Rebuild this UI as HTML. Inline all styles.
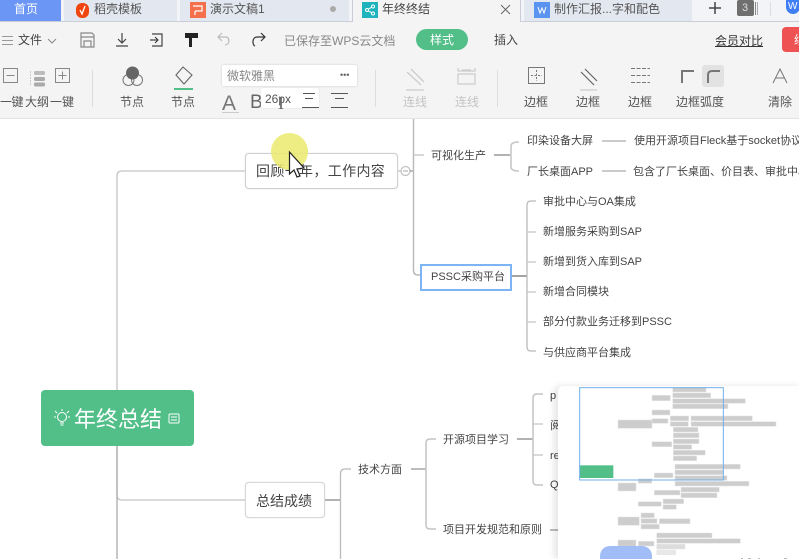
<!DOCTYPE html>
<html lang="zh"><head><meta charset="utf-8"><title>年终终结</title>
<style>
html,body{margin:0;padding:0;background:#fff}
#o{position:relative;width:803px;height:559px;overflow:hidden;background:#fff}
#p{position:absolute;left:0;top:0;width:799px;height:559px;overflow:hidden;background:#fff;font-family:"Liberation Sans","Noto Sans CJK SC",sans-serif;color:#444;filter:blur(.3px)}
#p div{position:absolute;white-space:nowrap}
.t{position:absolute;white-space:nowrap;line-height:16px}
.tb{font-size:12px;color:#555}
.m{font-size:11px;color:#444}
.g{color:#c4c4c4}
svg{position:absolute;overflow:visible}
</style></head><body><div id="o"><div id="p">
<!-- title bar -->
<div style="left:0;top:0;width:803px;height:21px;background:#f3f4f8"></div>
<div style="left:0;top:0;width:61px;height:21px;background:#6c96f5"></div>
<span class="t" style="left:14px;top:1px;font-size:12px;color:#fff">首页</span>
<div style="left:64px;top:0;width:113px;height:21px;background:#e3e7f0"></div>
<div style="left:180px;top:0;width:169px;height:21px;background:#e3e7f0"></div>
<div style="left:76px;top:3px;width:13px;height:15px;border-radius:6px;background:#f0450f"></div>
<svg style="left:76px;top:3px" width="13" height="15" fill="none" stroke="#fff" stroke-width="1.300"><path d="M4 7L6 11L9 3"/></svg>
<span class="t" style="left:94px;top:1px;font-size:12px;color:#555">稻壳模板</span>
<div style="left:190px;top:2px;width:16px;height:16px;background:#f5704a"></div>
<svg style="left:190px;top:2px" width="16" height="16" fill="none" stroke="#fff" stroke-width="1.200"><path d="M3 4H12V9H5M5 9V13"/></svg>
<span class="t" style="left:210px;top:1px;font-size:12px;color:#555">演示文稿1</span>
<div style="left:330px;top:6px;width:6px;height:6px;border-radius:3px;background:#aaa"></div>
<div style="left:352px;top:0;width:168px;height:22px;background:#f4f4f4"></div>
<div style="left:0;top:21px;width:352px;height:1px;background:#c9cdd8"></div>
<div style="left:352px;top:0;width:1px;height:22px;background:#c9cdd8"></div>
<div style="left:520px;top:0;width:1px;height:22px;background:#c9cdd8"></div>
<div style="left:520px;top:21px;width:283px;height:1px;background:#c9cdd8"></div>
<div style="left:362px;top:2px;width:16px;height:16px;background:#1eb3bd"></div>
<svg style="left:362px;top:2px" width="16" height="16" fill="none" stroke="#fff"><circle cx="5" cy="8" r="1.5"/><circle cx="11" cy="4.5" r="1.5"/><circle cx="11" cy="11.5" r="1.5"/><path d="M6.3 7.2L9.7 5.2M6.3 8.8L9.7 10.8"/></svg>
<span class="t" style="left:382px;top:1px;font-size:12px;color:#444">年终终结</span>
<svg style="left:500px;top:4px" width="12" height="12" stroke="#666" fill="none"><path d="M1 1L10 10M10 1L1 10"/></svg>
<div style="left:524px;top:0;width:168px;height:21px;background:#e3e7f0"></div>
<div style="left:534px;top:2px;width:16px;height:16px;background:#5a94f0"></div>
<svg style="left:534px;top:2px" width="16" height="16" fill="none" stroke="#fff"><path d="M4 5L6 11L8 6L10 11L12 5"/></svg>
<span class="t" style="left:554px;top:1px;font-size:12px;color:#555">制作汇报...字和配色</span>
<svg style="left:708px;top:1px" width="14" height="14" stroke="#444" stroke-width="1.5"><path d="M7 1V13M1 7H13"/></svg>
<div style="left:737px;top:0;width:17px;height:16px;background:#6f6f6f;border-radius:2px"></div>
<span class="t" style="left:742px;top:0;font-size:11px;color:#ddd">3</span>
<div style="left:755px;top:2px;width:1px;height:13px;background:#888"></div>
<div style="left:757px;top:2px;width:1px;height:13px;background:#aaa"></div>
<div style="left:770px;top:2px;width:1px;height:14px;background:#ddd"></div>
<div style="left:786px;top:0;width:14px;height:14px;border-radius:0 0 7px 7px;background:#3f7ef5"></div>
<span class="t" style="left:788px;top:-1px;font-size:10px;color:#fff">W</span>
<!-- toolbar -->
<div style="left:0;top:22px;width:803px;height:96px;background:#f4f4f4"></div>
<div style="left:0;top:118px;width:803px;height:1px;background:#e3e3e3"></div>
<svg style="left:2px;top:35px" width="11" height="11" stroke="#999"><path d="M0 1.5H11M0 5.5H11M0 9.5H11"/></svg>
<span class="t" style="left:18px;top:32px;font-size:12px;color:#444">文件</span>
<svg style="left:47px;top:38px" width="10" height="6" fill="none" stroke="#888"><path d="M1 1L5 5L9 1"/></svg>
<svg style="left:79px;top:32px" width="17" height="16" fill="none" stroke="#888" stroke-width="1.2"><path d="M2 1H13L15 3V15H2ZM5 15V9H12V15M2 5H15"/></svg>
<svg style="left:114px;top:32px" width="16" height="16" fill="none" stroke="#444" stroke-width="1.2"><path d="M8 1V11M4 7L8 11L12 7M2 14H14"/></svg>
<svg style="left:149px;top:32px" width="15" height="16" fill="none" stroke="#444" stroke-width="1.2"><path d="M3 2H13V14H3M1 8H9M6 5L9 8L6 11"/></svg>
<svg style="left:184px;top:32px" width="15" height="16"><path d="M1 1H14V6H8V15H5V6H1Z" fill="#222"/></svg>
<svg style="left:217px;top:32px" width="15" height="15" fill="none" stroke="#bbb" stroke-width="1.2"><path d="M5 1L1 5L5 9M1 5H9C13 5 13 13 8 13"/></svg>
<svg style="left:250px;top:32px" width="16" height="15" fill="none" stroke="#333" stroke-width="1.2"><path d="M11 1L15 5L11 9M15 5H7C2 5 2 13 5 14"/></svg>
<span class="t" style="left:284px;top:33px;font-size:12px;color:#888">已保存至WPS云文档</span>
<div style="left:416px;top:29px;width:52px;height:21px;border-radius:11px;background:#52bf89"></div>
<span class="t" style="left:430px;top:32px;font-size:12px;color:#fff">样式</span>
<span class="t" style="left:494px;top:32px;font-size:12px;color:#444">插入</span>
<span class="t" style="left:715px;top:33px;font-size:12px;color:#333;text-decoration:underline">会员对比</span>
<div style="left:782px;top:27px;width:21px;height:25px;border-radius:4px 0 0 4px;background:#ee5252"></div>
<span class="t" style="left:794px;top:32px;font-size:12px;color:#fff">续</span>
<!-- row 2 -->
<svg style="left:2px;top:68px" width="70" height="17" fill="none" stroke="#888"><rect x="1.500" y="0.500" width="14" height="14"/><path d="M4.500 7.500H12.500"/><rect x="53.500" y="0.500" width="14" height="14"/><path d="M56.500 7.500H64.500M60.500 3.500V11.500"/></svg>
<svg style="left:29px;top:70px" width="18" height="17"><path d="M1.500 1V16" stroke="#ccc" stroke-dasharray="2 1"/><rect x="5" y="1" width="11" height="4" rx="1.500" fill="#bbb"/><rect x="5" y="7" width="11" height="4" rx="1.500" fill="#aaa"/><rect x="5" y="12.500" width="11" height="4" rx="1.500" fill="#aaa"/></svg>
<span class="t tb" style="left:0;top:94px;letter-spacing:-.5px">一键</span>
<span class="t tb" style="left:25px;top:94px">大纲</span>
<span class="t tb" style="left:50px;top:94px">一键</span>
<div style="left:92px;top:70px;width:1px;height:37px;background:#ddd"></div>
<svg style="left:122px;top:65px" width="22" height="22" fill="none" stroke="#777"><circle cx="6.500" cy="15" r="5.500"/><circle cx="15" cy="15" r="5.500"/><circle cx="10.500" cy="8" r="6.500" fill="#666" stroke="none"/></svg>
<span class="t tb" style="left:120px;top:94px">节点</span>
<svg style="left:174px;top:66px" width="20" height="20" fill="none" stroke="#666" stroke-width="1.100"><path d="M9 1L18 9L10 18L2 9Z"/></svg>
<div style="left:174px;top:88px;width:19px;height:2px;background:#52bf89"></div>
<span class="t tb" style="left:171px;top:94px">节点</span>
<div style="left:222px;top:65px;width:135px;height:21px;background:#fff;border-radius:2px;box-shadow:0 0 2px #ccc"></div>
<span class="t" style="left:227px;top:68px;font-size:12px;color:#888">微软雅黑</span>
<span class="t" style="left:340px;top:67px;font-size:9px;color:#666">•••</span>
<span class="t" style="left:222px;top:93px;font-size:21px;line-height:22px;color:#777">A</span>
<div style="left:222px;top:112px;width:17px;height:1px;background:#ccc"></div>
<span class="t" style="left:250px;top:92px;font-size:19px;line-height:22px;color:#666">B</span>
<div style="left:261px;top:88px;width:58px;height:20px;background:#fff;border-radius:2px;box-shadow:0 0 1px #ccc"></div>
<span class="t" style="left:265px;top:91px;font-size:12px;color:#555">26px</span>
<span class="t" style="left:278px;top:93px;font-size:18px;line-height:20px;color:#666;font-family:'Liberation Serif',serif">I</span>
<svg style="left:301px;top:92px" width="48" height="17" stroke="#555"><path d="M2 1.500H14M4 6.500H12M1 15.500H18M30 1.500H47M34 6.500H43M30 15.500H47"/></svg>
<div style="left:375px;top:70px;width:1px;height:37px;background:#ddd"></div>
<svg style="left:404px;top:67px" width="22" height="24" fill="none" stroke="#ccc" stroke-width="1.300"><path d="M3 5L17 18M7 2L20 15"/><path d="M2 23H20"/></svg>
<span class="t tb g" style="left:403px;top:94px">连线</span>
<svg style="left:457px;top:67px" width="20" height="18" fill="none" stroke="#ccc" stroke-width="1.200"><path d="M1 1V4H18V1M1 17V7H18V17ZM5 3H14"/></svg>
<span class="t tb g" style="left:455px;top:94px">连线</span>
<div style="left:497px;top:70px;width:1px;height:37px;background:#ddd"></div>
<svg style="left:528px;top:67px" width="17" height="17" fill="none" stroke="#777"><rect x="0.500" y="0.500" width="16" height="16"/><path d="M8.500 3V14M3 8.500H14" stroke-dasharray="2 1.500"/></svg>
<span class="t tb" style="left:524px;top:94px">边框</span>
<svg style="left:579px;top:67px" width="20" height="24" fill="none" stroke="#666" stroke-width="1.200"><path d="M2 5L15 18M6 2L18 14"/><path d="M1 23H18" stroke="#ccc"/></svg>
<span class="t tb" style="left:576px;top:94px">边框</span>
<svg style="left:630px;top:67px" width="20" height="17" stroke="#777" stroke-dasharray="4 1.500"><path d="M1 1.500H20M1 8.500H20M1 15.500H20"/></svg>
<span class="t tb" style="left:628px;top:94px">边框</span>
<svg style="left:681px;top:70px" width="13" height="13" fill="none" stroke="#777" stroke-width="2"><path d="M1 13V1H13"/></svg>
<div style="left:702px;top:65px;width:22px;height:22px;border-radius:3px;background:#e2e2e2"></div>
<svg style="left:707px;top:70px" width="13" height="13" fill="none" stroke="#777" stroke-width="2"><path d="M1 13V5Q1 1 5 1H13"/></svg>
<span class="t tb" style="left:676px;top:94px">边框弧度</span>
<svg style="left:772px;top:68px" width="16" height="16" fill="none" stroke="#777"><path d="M1 15L8 1L15 15M3 10H13"/></svg>
<span class="t tb" style="left:768px;top:94px">清除</span>
<!-- connectors -->
<svg style="left:0;top:0" width="803" height="559" fill="none" stroke="#c4c4c4" stroke-width="1.300">
<path d="M117 390V176Q117 171 122 171H245" />
<path d="M117 446V495Q117 500 122 500H245" />
<path d="M117 446V559" stroke="#aaa"/>
<path d="M398 171H401" /><circle cx="405.500" cy="171" r="4.500" fill="#fff"/><path d="M403 171H408" stroke="#bbb"/>
<path d="M410 171H413" stroke="#999"/>
<path d="M413.500 119V270Q413.500 275 418 275H420" stroke="#bbb" stroke-width="1.500"/>
<path d="M413.500 155H424"/>
<path d="M494 155H510" stroke="#999" stroke-width="1.500"/>
<path d="M519 142Q511 142 511 146V167Q511 171 519 171" stroke-width="1.500"/>
<path d="M602 141H626M602 171H626" stroke="#aaa"/>
<path d="M512 276H527" stroke="#999" stroke-width="1.800"/>
<path d="M536 201H531Q527 201 527 205V347Q527 351 531 351H536" stroke="#bbb" stroke-width="1.300"/>
<path d="M527 232H536M527 262H536M527 292H536M527 322H536" />
<path d="M325 500H340" stroke="#aaa" stroke-width="1.800"/>
<path d="M340.500 559V474Q340.500 469 345 469H351" stroke="#bbb" stroke-width="1.300"/>
<path d="M411 469H426" stroke="#999"/>
<path d="M436 439H430Q426 439 426 443V525Q426 529 430 529H436" stroke-width="1.500"/>
<path d="M517 439H533" stroke="#999" stroke-width="1.500"/>
<path d="M543 394H537Q533 394 533 398V481Q533 485 537 485H543" stroke-width="1.500"/>
<path d="M533 424H543M533 455H543"/>
<path d="M550 530H558" stroke="#999"/>
</svg>
<!-- root node -->
<div style="left:41px;top:390px;width:153px;height:56px;border-radius:4px;background:#52bf89"></div>
<svg style="left:53px;top:408px" width="18" height="20" fill="none" stroke="#fff"><circle cx="9" cy="9" r="4.500"/><path d="M7 15H11M7.500 17H10.500M9 1V3M2 3L4 5M16 3L14 5M1 9H3M15 9H17"/></svg>
<span class="t" style="left:74px;top:406px;font-size:22px;line-height:28px;color:#fff">年终总结</span>
<svg style="left:168px;top:413px" width="12" height="11" fill="none" stroke="#fff"><rect x="1" y="1" width="10" height="9" rx="1"/><path d="M3 4H9M3 7H9"/></svg>
<!-- branch nodes -->
<div style="left:245px;top:153px;width:151px;height:34px;border:1px solid #d0d0d0;border-radius:4px;background:#fff;box-shadow:0 0 1px #ccc"></div>
<span class="t" style="left:256px;top:163px;font-size:14px;color:#444;letter-spacing:.35px">回顾一年，工作内容</span>
<div style="left:245px;top:482px;width:78px;height:34px;border:1px solid #d8d8d8;border-radius:4px;background:#fff;box-shadow:0 0 1px #ccc"></div>
<span class="t" style="left:256px;top:493px;font-size:14px;color:#444">总结成绩</span>
<div style="left:420px;top:264px;width:88px;height:23px;border:2px solid #7db4f5;background:#fff"></div>
<span class="t m" style="left:431px;top:269px">PSSC采购平台</span>
<span class="t m" style="left:431px;top:148px">可视化生产</span>
<span class="t m" style="left:527px;top:133px">印染设备大屏</span>
<span class="t m" style="left:527px;top:164px">厂长桌面APP</span>
<span class="t m" style="left:634px;top:133px">使用开源项目Fleck基于socket协议</span>
<span class="t m" style="left:633px;top:164px">包含了厂长桌面、价目表、审批中心</span>
<span class="t m" style="left:543px;top:194px">审批中心与OA集成</span>
<span class="t m" style="left:543px;top:224px">新增服务采购到SAP</span>
<span class="t m" style="left:543px;top:254px">新增到货入库到SAP</span>
<span class="t m" style="left:543px;top:284px">新增合同模块</span>
<span class="t m" style="left:543px;top:314px">部分付款业务迁移到PSSC</span>
<span class="t m" style="left:543px;top:345px">与供应商平台集成</span>
<span class="t m" style="left:358px;top:462px">技术方面</span>
<span class="t m" style="left:443px;top:432px">开源项目学习</span>
<span class="t m" style="left:443px;top:522px">项目开发规范和原则</span>
<span class="t m" style="left:550px;top:388px">p</span>
<span class="t m" style="left:550px;top:418px">阅</span>
<span class="t m" style="left:550px;top:448px">re</span>
<span class="t m" style="left:550px;top:477px">Q</span>
<!-- yellow highlight + cursor -->
<div style="left:271px;top:133px;width:37px;height:37px;border-radius:50%;background:rgba(234,234,110,.85)"></div>
<svg style="left:288px;top:151px" width="20" height="28"><path d="M1.500 1V23L6 19L9 26L12 25L9 18L16 17Z" fill="#fff" stroke="#222" stroke-width="1.200"/></svg>
<!-- minimap -->
<div style="left:558px;top:386px;width:245px;height:173px;background:#fff;border-radius:5px 0 0 0;box-shadow:-4px 0 7px rgba(0,0,0,.1)"></div>
<svg style="left:550px;top:380px" width="253" height="179" viewBox="0 0 759 537" fill="#cdcdcd" stroke="#e6e6e6" stroke-width="1.500">
<rect x="368" y="22" width="100" height="14"/><rect x="368" y="39" width="114" height="14"/><rect x="306" y="46" width="55" height="16"/><rect x="368" y="56" width="218" height="14"/><rect x="368" y="72" width="166" height="14"/><rect x="306" y="90" width="54" height="15"/><rect x="361" y="108" width="55" height="14"/><rect x="423" y="108" width="184" height="14"/><rect x="306" y="116" width="48" height="14"/><rect x="361" y="125" width="54" height="14"/><rect x="423" y="125" width="255" height="14"/><rect x="204" y="120" width="102" height="25"/><rect x="370" y="142" width="74" height="14"/><rect x="370" y="159" width="77" height="14"/><rect x="370" y="177" width="77" height="14"/><rect x="306" y="185" width="59" height="15"/><rect x="370" y="194" width="55" height="14"/><rect x="370" y="211" width="96" height="14"/><rect x="370" y="228" width="70" height="14"/><rect x="375" y="253" width="196" height="14"/><rect x="375" y="270" width="145" height="14"/><rect x="313" y="279" width="56" height="14"/><rect x="375" y="287" width="156" height="14"/><rect x="265" y="296" width="40" height="14"/><rect x="375" y="304" width="222" height="14"/><rect x="204" y="309" width="54" height="24"/><rect x="393" y="322" width="115" height="14"/><rect x="313" y="331" width="77" height="14"/><rect x="393" y="339" width="108" height="14"/><rect x="339" y="357" width="62" height="14"/><rect x="265" y="365" width="69" height="14"/><rect x="339" y="374" width="40" height="14"/><rect x="273" y="399" width="40" height="14"/><rect x="204" y="411" width="64" height="25"/><rect x="273" y="416" width="48" height="14"/><rect x="328" y="416" width="92" height="15"/><rect x="273" y="433" width="55" height="14"/><rect x="320" y="459" width="166" height="14"/><rect x="320" y="476" width="251" height="14"/><rect x="204" y="480" width="54" height="24"/><rect x="265" y="484" width="47" height="14"/><rect x="320" y="493" width="85" height="14" fill="#dcdcdc"/><rect x="320" y="510" width="57" height="14" fill="#e8e8e8"/>
<rect x="89" y="256" width="101" height="38" fill="#52bf89" stroke="none"/>
<rect x="89" y="23" width="431" height="277" fill="none" stroke="#6fb0e8" stroke-width="3"/>
</svg>
<div style="left:600px;top:546px;width:52px;height:13px;border-radius:10px 10px 0 0;background:#a0bdf8"></div>
<svg style="left:738px;top:557px" width="50" height="2" stroke="#bbb"><path d="M3 1.500H5M10 1.500H13M20 1.500H22M46 1.500H49"/></svg>
</div></div></body></html>
